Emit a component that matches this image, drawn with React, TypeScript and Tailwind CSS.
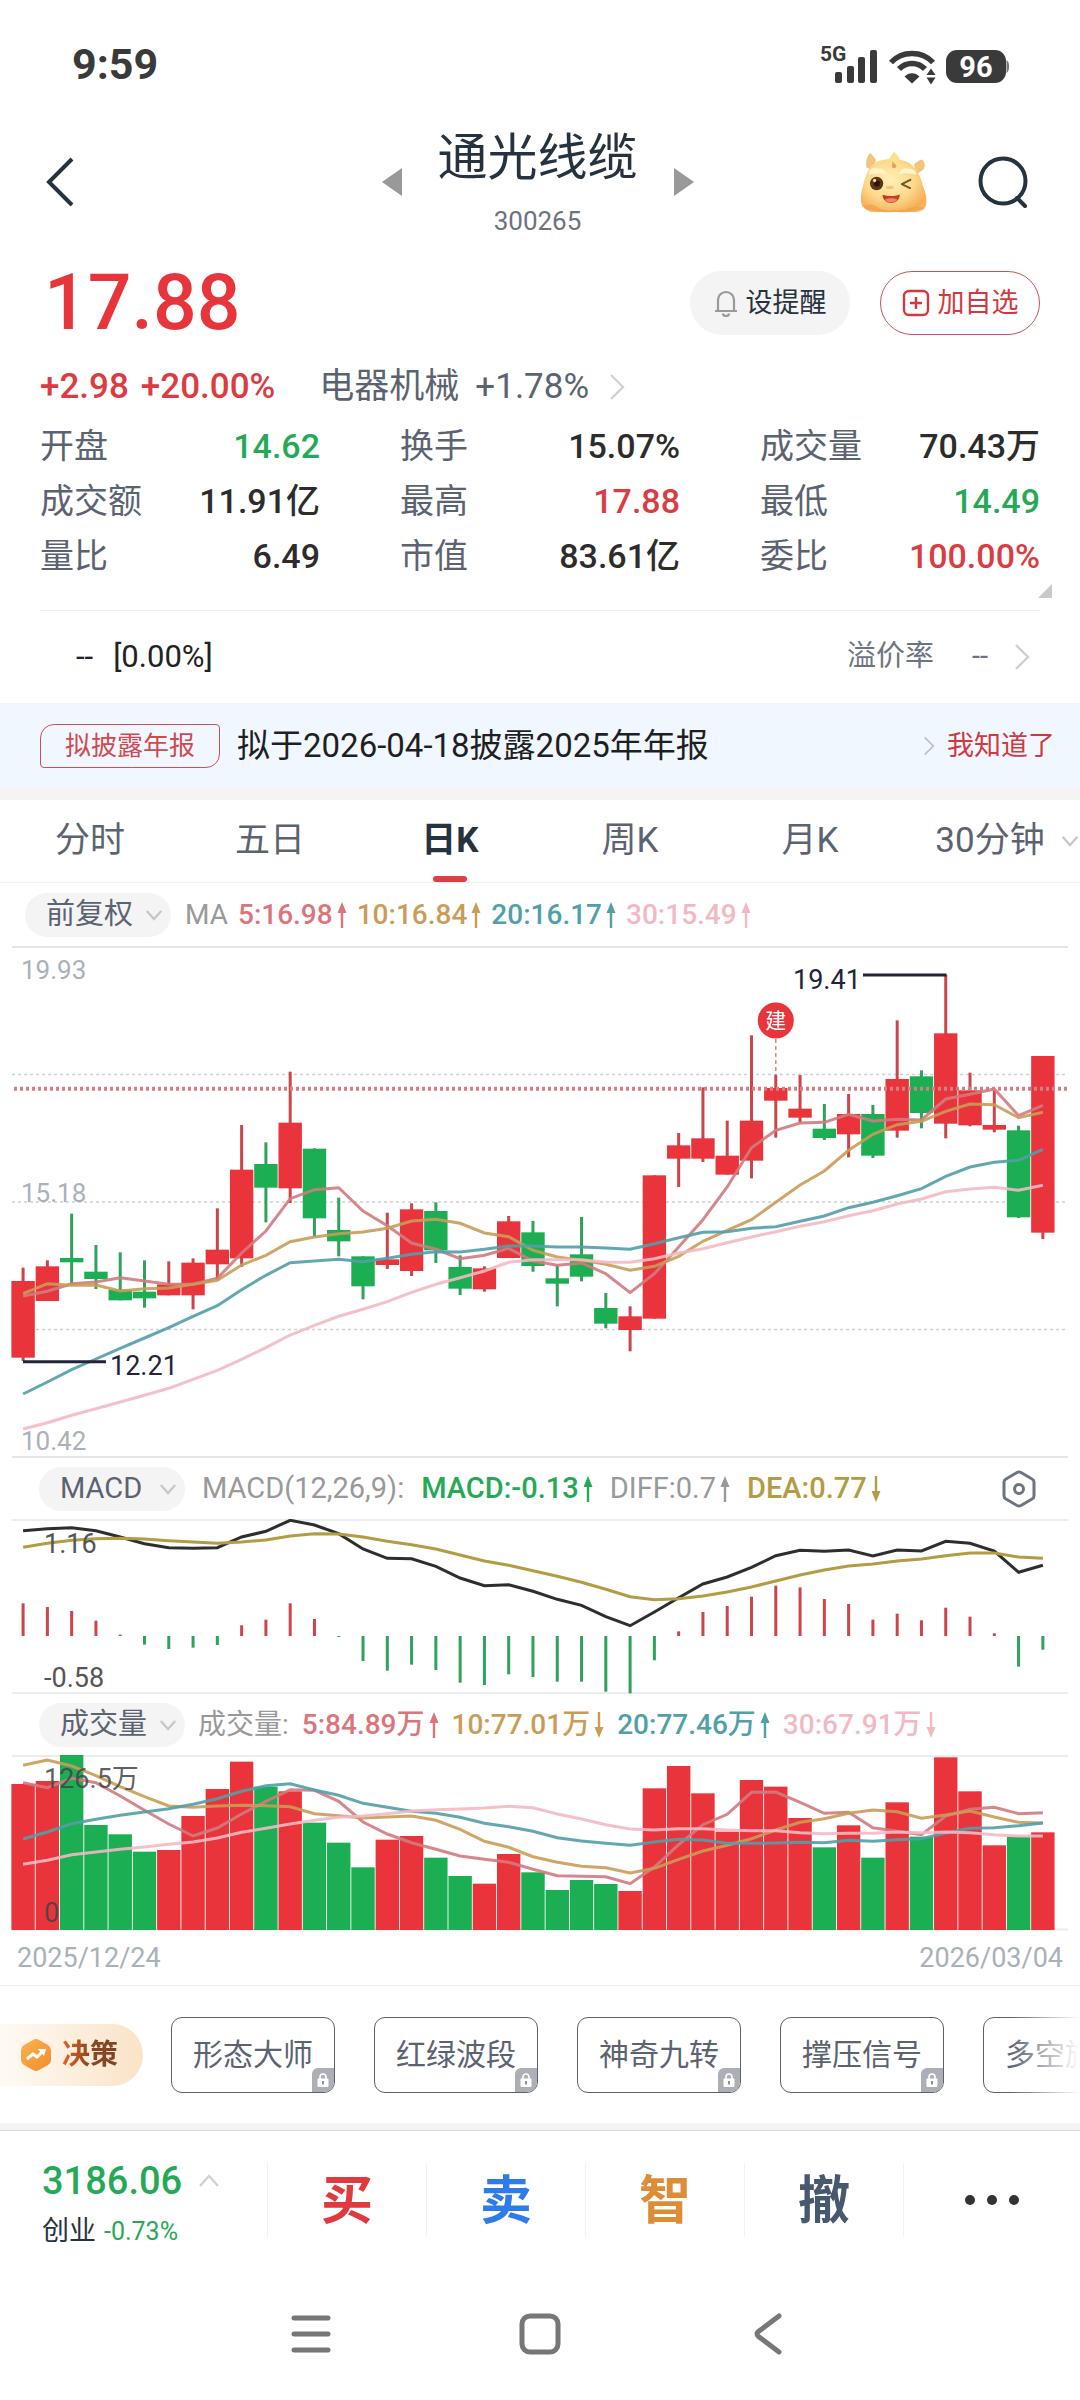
import { useState } from 'react'
import { clsx } from 'clsx'

const RED = '#ea343b'
const GREEN = '#1bae52'
const WICK_RED = '#cb454b'
const WICK_GREEN = '#30a25c'

const MA5 = '#d27a80'
const MA10 = '#c99c58'
const MA20 = '#529fa8'
const MA30 = '#f3b9c3'

// Samples are kept on a 3x vertical grid: [high, body top, body bottom, low, rising]
const CANDLES: [number, number, number, number, 0 | 1][] = [
  [982, 1022, 1252, 1262, 1], [960, 978, 1082, 1082, 1], [820, 953, 966, 1030, 0], [914, 994, 1016, 1046, 0],
  [936, 1048, 1080, 1080, 0], [960, 1054, 1074, 1102, 0], [963, 1032, 1065, 1065, 1], [954, 967, 1065, 1107, 1],
  [804, 928, 972, 1018, 1], [554, 688, 954, 980, 1], [606, 671, 742, 846, 0], [394, 547, 744, 788, 1],
  [624, 625, 834, 890, 0], [772, 869, 903, 948, 0], [948, 948, 1038, 1077, 0], [817, 957, 974, 986, 1],
  [789, 807, 992, 1007, 1], [786, 812, 930, 968, 0], [945, 980, 1045, 1064, 0], [978, 984, 1047, 1054, 1],
  [827, 843, 953, 953, 1], [842, 876, 977, 994, 0], [975, 1014, 1030, 1098, 0], [830, 942, 1009, 1023, 0],
  [1058, 1103, 1150, 1164, 0], [1098, 1128, 1169, 1233, 1], [705, 705, 1135, 1135, 1], [578, 615, 655, 740, 1],
  [441, 594, 655, 665, 1], [541, 646, 703, 703, 1], [285, 541, 661, 714, 1], [404, 443, 481, 592, 1],
  [404, 505, 532, 548, 1], [491, 565, 593, 599, 0], [461, 521, 582, 651, 1], [494, 521, 646, 653, 0],
  [240, 416, 571, 592, 1], [390, 408, 518, 564, 0], [104, 279, 550, 594, 1], [397, 450, 555, 558, 1],
  [450, 554, 568, 576, 1], [556, 570, 831, 833, 0], [347, 347, 877, 896, 1],
]

const PRICE_LINES = [
  { color: MA5, data: [1067, 1053, 1030, 1025, 1012, 1022, 1032, 1032, 1014, 938, 872, 775, 748, 742, 812, 856, 908, 927, 955, 945, 924, 962, 975, 968, 1000, 1057, 1000, 920, 838, 740, 622, 570, 548, 546, 522, 542, 537, 539, 476, 462, 446, 526, 495] },
  { color: MA10, data: [1060, 1030, 1035, 1034, 1052, 1045, 1043, 1032, 1020, 974, 945, 904, 890, 880, 875, 864, 842, 837, 849, 878, 889, 930, 950, 960, 972, 990, 978, 948, 903, 870, 838, 786, 734, 692, 630, 582, 553, 543, 513, 491, 493, 532, 516] },
  { color: MA20, data: [1361, 1325, 1288, 1256, 1224, 1193, 1162, 1128, 1096, 1048, 1005, 967, 962, 957, 964, 954, 942, 934, 935, 927, 917, 917, 920, 920, 923, 927, 910, 892, 876, 874, 864, 859, 843, 827, 802, 786, 766, 745, 708, 680, 666, 660, 627] },
  { color: MA30, data: [1466, 1447, 1425, 1405, 1385, 1365, 1344, 1317, 1290, 1257, 1222, 1184, 1155, 1128, 1107, 1084, 1056, 1032, 1012, 992, 966, 958, 958, 958, 966, 966, 955, 938, 925, 907, 890, 874, 858, 844, 826, 811, 791, 776, 754, 746, 741, 750, 735] },
]

const DIFF = [240, 234, 231, 240, 259, 279, 291, 293, 291, 259, 242, 209, 223, 249, 295, 323, 324, 347, 382, 405, 402, 422, 446, 464, 498, 525, 484, 441, 400, 379, 350, 315, 299, 302, 298, 316, 298, 301, 272, 278, 301, 365, 344]
const DEA = [290, 278, 269, 264, 263, 265, 270, 274, 278, 274, 268, 256, 249, 250, 259, 272, 282, 295, 313, 331, 344, 360, 377, 395, 416, 438, 447, 444, 436, 424, 409, 391, 373, 358, 346, 340, 331, 325, 315, 307, 307, 319, 323]
const HIST = [458, 469, 481, 510, 552, 582, 595, 591, 583, 524, 507, 458, 505, 559, 631, 660, 642, 658, 696, 703, 671, 679, 693, 693, 723, 728, 629, 542, 484, 466, 438, 405, 410, 445, 460, 507, 489, 509, 471, 498, 548, 648, 597]
const HIST_ZERO = 556

const VOLUME = [282, 273, 195, 405, 433, 485, 480, 378, 297, 215, 290, 304, 398, 458, 532, 449, 438, 503, 558, 581, 492, 547, 600, 570, 582, 603, 295, 228, 310, 425, 270, 290, 384, 472, 406, 503, 337, 440, 202, 304, 466, 440, 427]
const VOLUME_LINES = [
  { color: MA5, data: [278, 293, 265, 278, 318, 361, 402, 438, 414, 372, 334, 299, 301, 334, 396, 432, 458, 478, 498, 508, 517, 538, 557, 559, 560, 581, 531, 464, 404, 373, 307, 306, 337, 370, 367, 413, 424, 434, 378, 358, 352, 371, 368] },
  { color: MA10, data: [226, 210, 228, 257, 290, 320, 348, 352, 348, 346, 347, 350, 371, 377, 384, 381, 378, 391, 418, 454, 472, 500, 517, 529, 533, 549, 535, 508, 483, 466, 446, 420, 397, 386, 370, 360, 365, 385, 375, 363, 381, 397, 399] },
  { color: MA20, data: [447, 426, 401, 388, 376, 366, 356, 343, 326, 304, 287, 281, 300, 316, 340, 352, 364, 370, 382, 400, 410, 424, 443, 453, 460, 466, 456, 448, 450, 460, 460, 459, 457, 458, 451, 454, 449, 446, 429, 415, 413, 407, 399] },
  { color: MA30, data: [523, 511, 494, 486, 478, 471, 463, 456, 444, 427, 415, 402, 391, 382, 378, 371, 363, 359, 357, 354, 349, 353, 372, 387, 404, 417, 420, 416, 416, 420, 422, 422, 428, 431, 430, 430, 426, 428, 426, 428, 434, 438, 438] },
]

const STATS = [
  { label: '开盘', value: '14.62', tone: 'down' },
  { label: '换手', value: '15.07%' },
  { label: '成交量', value: '70.43万' },
  { label: '成交额', value: '11.91亿' },
  { label: '最高', value: '17.88', tone: 'up' },
  { label: '最低', value: '14.49', tone: 'down' },
  { label: '量比', value: '6.49' },
  { label: '市值', value: '83.61亿' },
  { label: '委比', value: '100.00%', tone: 'up' },
]

const TABS = ['分时', '五日', '日K', '周K', '月K', '30分钟']
const STRATEGIES = ['形态大师', '红绿波段', '神奇九转', '撑压信号', '多空旗舰']

const TRADES = [
  { label: '买', color: 'text-[#e0393e]' },
  { label: '卖', color: 'text-[#2f7bea]' },
  { label: '智', color: 'text-[#dd8d38]' },
  { label: '撤', color: 'text-[#47586f]' },
]

const cx = (i: number) => 23.1 + i * 24.28

function toPoints(data: number[], y: (v: number) => number) {
  return data.map((v, i) => `${cx(i).toFixed(1)},${y(v).toFixed(1)}`).join(' ')
}

interface ChevronProps {
  dir: 'right' | 'down' | 'up'
  className?: string
}

function Chevron({ dir, className }: ChevronProps) {
  const paths = { right: 'M2 2l12 12L2 26', down: 'M2 2l8 9 8-9', up: 'M2 12l9-10 9 10' }
  const boxes = { right: '0 0 16 28', down: '0 0 20 13', up: '0 0 22 14' }
  return (
    <svg viewBox={boxes[dir]} className={className} fill="none" stroke="currentColor" strokeWidth="2.4" aria-hidden="true">
      <path d={paths[dir]} />
    </svg>
  )
}

function Arrow({ up }: { up: boolean }) {
  return (
    <svg viewBox="0 0 10 26" className={clsx('ml-1 h-[26px] w-[10px] shrink-0', !up && 'rotate-180')} fill="currentColor" aria-hidden="true">
      <path d="M5 0l4.500 11h-3.300v15h-2.400v-15h-3.300z" />
    </svg>
  )
}

function Reading({ text, up, className }: { text: string; up: boolean; className: string }) {
  return (
    <span className={clsx('flex items-center whitespace-nowrap', className)}>
      {text}
      <Arrow up={up} />
    </span>
  )
}

interface PillSelectProps {
  label: string
  options: string[]
}

function PillSelect({ label, options }: PillSelectProps) {
  return (
    <div className="relative flex h-11 w-[146px] shrink-0 items-center rounded-full bg-[#f4f4f4] text-[29px] text-[#5b6371]">
      <select aria-label={label} className="h-full w-full appearance-none bg-transparent pl-[21px] outline-none">
        {options.map((o) => (
          <option key={o}>{o}</option>
        ))}
      </select>
      <Chevron dir="down" className="pointer-events-none absolute right-2 h-3 w-[18px] text-[#c3c6ca]" />
    </div>
  )
}

function StatusBar() {
  return (
    <div className="flex h-[125px] items-center justify-between pt-1 pr-[70px] pl-[72px] text-[#3a3a3a]">
      <span className="text-[43px] font-bold">9:59</span>
      <svg viewBox="0 0 190 40" className="h-10 w-[190px]" fill="currentColor" role="img" aria-label="5G, Wi-Fi, 96%">
        <text x="0" y="16" fontSize="21" fontWeight="700">5G</text>
        <rect x="15" y="27" width="7" height="11" rx="2" />
        <rect x="27" y="21" width="7" height="17" rx="2" />
        <rect x="38" y="12" width="7" height="26" rx="2" />
        <rect x="50" y="5" width="7" height="33" rx="2" />
        <g fill="none" stroke="currentColor" strokeWidth="5.500">
          <path d="M71 17.500c11-12 31-12 42 0" />
          <path d="M79 24c7-7.500 19-7.500 26 0" />
        </g>
        <path d="M84.500 31.500c4-4.500 11-4.500 15 0l-7.500 7z" />
        <path d="M111 23.500l4.500 6.500h-9zM111 39.500l4.500-7h-9z" />
        <rect x="126" y="5" width="60" height="33" rx="11" />
        <path d="M186.500 15c3.500 1.500 3.500 11.500 0 13z" opacity="0.7" />
        <text x="156" y="32" fontSize="29" fontWeight="700" textAnchor="middle" fill="#fff">96</text>
      </svg>
    </div>
  )
}

function Mascot() {
  return (
    <svg viewBox="178 390 202 190" className="h-[63px] w-[67px]" aria-hidden="true">
      <defs>
        <radialGradient id="face" cx="0.45" cy="0.4" r="0.65">
          <stop offset="0" stopColor="#fff0b8" />
          <stop offset="0.6" stopColor="#fcd98a" />
          <stop offset="1" stopColor="#f5ae58" />
        </radialGradient>
      </defs>
      <path d="M186 500c-6 20-8 45 0 58 20 16 70 18 94 16 40 2 82-2 96-16 6-20 0-45-8-60z" fill="#f6b55c" />
      <path d="M198 440c-4-16 0-32 10-44 8 6 14 14 18 22l-10 30zM370 446c6-12 4-24-6-30-10 4-18 8-24 16l12 26z" fill="#f3c47c" />
      <path d="M186 540c-6-30 8-92 34-112 24-18 88-20 114 4 26 20 40 70 38 110-20 24-60 30-94 30s-78-6-92-32z" fill="url(#face)" />
      <path d="M262 418c6-8 12-18 18-26 8 6 14 14 18 24-8 10-28 12-36 2z" fill="#fbe08f" />
      <path d="M276 422c4 6 10 8 12 14-4 8-10 8-14 2z" fill="#dfa456" />
      <path d="M204 462c2-20 16-24 26-18 12-4 24 2 28 18-18-6-36-6-54 0zM296 460c4-16 18-22 30-16 12-2 20 6 22 18-16-6-36-6-52-2z" fill="#fff3c8" />
      <ellipse cx="228" cy="488" rx="20" ry="20" fill="#5f3518" />
      <circle cx="229" cy="488" r="9" fill="#2b1409" />
      <circle cx="222" cy="479" r="5" fill="#f6d9a8" />
      <path d="M330 477l-26 13 25 12" fill="none" stroke="#6b5a20" strokeWidth="6" strokeLinecap="round" strokeLinejoin="round" />
      <ellipse cx="268" cy="500" rx="12" ry="5" fill="#f8c373" />
      <path d="M246 522c16 5 36 5 52-1 0 34-52 34-52 1z" fill="#c93c1e" />
      <path d="M253 537c10-6 28-6 38 0-8 10-30 11-38 0z" fill="#f08468" />
      <path d="M188 556c20-8 36-4 50 8 24 8 52 6 76 2 20-10 44-10 60-4-4 8-18 12-34 12H214c-14-2-24-10-26-18z" fill="#f3a047" opacity="0.7" />
    </svg>
  )
}

function Header() {
  return (
    <header className="grid h-[114px] grid-cols-[1fr_auto_1fr] items-center pr-[50px] pl-[45px]">
      <button aria-label="返回" className="w-fit text-[#27323f]">
        <svg viewBox="0 0 30 50" className="h-[50px] w-[30px]" fill="none" stroke="currentColor" strokeWidth="4">
          <path d="M27 2L4 25l23 23" />
        </svg>
      </button>
      <div className="flex items-center gap-[36px] text-[#999]">
        <button aria-label="上一只">
          <svg viewBox="0 0 20 28" className="h-7 w-5" fill="currentColor"><path d="M20 0v28L0 14z" /></svg>
        </button>
        <div className="flex flex-col items-center gap-3">
          <h1 className="text-[50px] leading-[66px] text-[#27323f]">通光线缆</h1>
          <span className="text-[26px] leading-9 text-[#6d7280]">300265</span>
        </div>
        <button aria-label="下一只">
          <svg viewBox="0 0 20 28" className="h-7 w-5" fill="currentColor"><path d="M0 0v28l20-14z" /></svg>
        </button>
      </div>
      <div className="flex items-center justify-end gap-[51px]">
        <button aria-label="助手"><Mascot /></button>
        <button aria-label="搜索" className="text-[#27323f]">
          <svg viewBox="0 0 52 54" className="h-[54px] w-[52px]" fill="none" stroke="currentColor" strokeWidth="4">
            <circle cx="25" cy="26" r="22.500" />
            <path d="M39 43l8 8" strokeLinecap="round" />
          </svg>
        </button>
      </div>
    </header>
  )
}

function Quote() {
  return (
    <section className="relative px-10 pt-8">
      <div className="flex h-16 items-center justify-between">
        <span className="ml-1 text-[77px] leading-none font-medium text-[#e8353c]">17.88</span>
        <div className="flex gap-[30px] text-[27px]">
          <button className="flex h-16 w-40 items-center justify-center gap-2 rounded-full bg-[#f4f4f4] text-[#27323f]">
            <svg viewBox="0 0 24 28" className="h-7 w-6" fill="none" stroke="#999" strokeWidth="2.200" aria-hidden="true">
              <path d="M1 22h22M4 22V11a8 8 0 0 1 16 0v11M9 24.500a3 2.500 0 0 0 6 0" />
            </svg>
            设提醒
          </button>
          <button className="flex h-16 w-40 items-center justify-center gap-2 rounded-full border border-[#cf5054] text-[#d2383d]">
            <svg viewBox="0 0 28 28" className="h-7 w-7" fill="none" stroke="currentColor" strokeWidth="2.400" aria-hidden="true">
              <rect x="2" y="2" width="24" height="24" rx="5" />
              <path d="M14 8v12M8 14h12" />
            </svg>
            加自选
          </button>
        </div>
      </div>

      <div className="mt-[30px] flex h-11 items-center text-[35px] text-[#5b6371]">
        <span className="font-medium text-[#dc3c41]">+2.98</span>
        <span className="ml-3 font-medium text-[#dc3c41]">+20.00%</span>
        <a href="#sector" className="ml-11 flex items-center">
          电器机械
          <span className="ml-4">+1.78%</span>
          <Chevron dir="right" className="ml-5 h-7 w-4 text-[#cfd1d4]" />
        </a>
      </div>

      <dl className="mt-[10px] grid grid-cols-3 gap-x-20 text-[34px]">
        {STATS.map((s) => (
          <div key={s.label} className="flex h-[55px] items-center justify-between whitespace-nowrap">
            <dt className="text-[#5b6371]">{s.label}</dt>
            <dd
              className={clsx(
                'font-medium',
                s.tone === 'up' && 'text-[#dc3c41]',
                s.tone === 'down' && 'text-[#26a957]',
                !s.tone && 'text-[#2c2c2c]'
              )}
            >
              {s.value}
            </dd>
          </div>
        ))}
      </dl>
      <svg viewBox="0 0 14 14" className="absolute right-7 bottom-0 h-[14px] w-[14px]" fill="#c6c9cd" aria-hidden="true">
        <path d="M14 0v14H0z" />
      </svg>
      <div className="h-[14px]" />
    </section>
  )
}

function Premium() {
  return (
    <div className="mx-10 mt-3 flex h-[93px] items-center border-t border-[#eee] pl-9 text-[31px]">
      <span className="text-[#222]">--</span>
      <span className="ml-5 text-[#222]">[0.00%]</span>
      <a href="#premium" className="ml-auto flex items-center pr-[10px] text-[29px] text-[#6d7480]">
        溢价率
        <span className="ml-[38px]">--</span>
        <Chevron dir="right" className="ml-[26px] h-7 w-4 text-[#cfd1d4]" />
      </a>
    </div>
  )
}

function Notice() {
  return (
    <div className="flex h-[86px] items-center bg-[#f0f7ff] pr-[25px] pl-10 whitespace-nowrap">
      <span className="flex h-11 w-[180px] items-center justify-center rounded-tl-[14px] rounded-br-[14px] rounded-tr-sm rounded-bl-sm border border-[#cf5054] text-[26px] text-[#d24a4e]">
        拟披露年报
      </span>
      <span className="ml-[17px] text-[33px] text-[#1f1f1f]">拟于2026-04-18披露2025年年报</span>
      <button className="ml-auto flex items-center gap-3 text-[27px] text-[#d2383d]">
        <Chevron dir="right" className="h-5 w-3 text-[#b9bec6]" />
        我知道了
      </button>
    </div>
  )
}

function PeriodTabs() {
  const [active, setActive] = useState('日K')
  return (
    <nav className="grid h-[83px] grid-cols-6 border-b border-[#f0f0f0] text-[35px]">
      {TABS.map((t) => (
        <button
          key={t}
          onClick={() => setActive(t)}
          className={clsx(
            'relative flex items-center justify-center whitespace-nowrap',
            t === active ? 'font-bold text-[#27323f]' : 'text-[#5b6371]'
          )}
        >
          {t}
          {t === active && <span className="absolute bottom-0 h-[6px] w-[34px] rounded-full bg-[#de3f42]" />}
          {t === '30分钟' && <Chevron dir="down" className="absolute right-0 h-3 w-5 text-[#c3c6ca]" />}
        </button>
      ))}
    </nav>
  )
}

function PriceChart() {
  const y = (v: number) => (v - 20) / 3 + 1
  return (
    <svg viewBox="0 0 1080 512" className="block w-full" role="img" aria-label="日K线">
      <path d="M12 1h1056M12 511h1056" stroke="#e6e6e6" strokeWidth="2" />
      <path d="M12 128.500h1054M12 256h1054M12 383.500h1054" stroke="#cdd1d1" strokeWidth="1.300" strokeDasharray="3 3" />
      <g fontSize="26" fill="#a9b1b9">
        <text x="21" y="33">19.93</text>
        <text x="21" y="256">15.18</text>
        <text x="21" y="504">10.42</text>
      </g>
      {CANDLES.map(([high, top, bottom, low, rising], i) => (
        <g key={i}>
          <rect x={cx(i) - 1.5} y={y(high)} width="3" height={y(low) - y(high)} fill={rising ? WICK_RED : WICK_GREEN} />
          <rect x={cx(i) - 11.7} y={y(top)} width="23.400" height={y(bottom) - y(top)} fill={rising ? RED : GREEN} />
        </g>
      ))}
      <path d="M14 142.700h1053" stroke="#d28084" strokeWidth="4" strokeDasharray="3 3" />
      {PRICE_LINES.map((l) => (
        <polyline key={l.color} points={toPoints(l.data, y)} fill="none" stroke={l.color} strokeWidth="3" strokeOpacity="0.9" />
      ))}
      <path d="M23 415.700h83M863 29h83.500" stroke="#22253a" strokeWidth="3" />
      <g fontSize="27" fill="#22253a">
        <text x="110" y="429">12.21</text>
        <text x="793" y="43">19.41</text>
      </g>
      <path d="M775.800 93v36" stroke="#d28084" strokeWidth="1.400" strokeDasharray="4 3" />
      <circle cx="775.800" cy="74.500" r="18" fill={RED} />
      <text x="775.800" y="82" fontSize="21" fill="#fff" textAnchor="middle">建</text>
    </svg>
  )
}

function MacdChart() {
  const y = (v: number) => (v - 208) / 3 + 1
  return (
    <svg viewBox="0 0 1080 175" className="block w-full" role="img" aria-label="MACD">
      <path d="M12 1h1056M12 174h1056" stroke="#e8e8e8" strokeWidth="1.500" />
      {HIST.map((v, i) => (
        <rect
          key={i}
          x={cx(i) - 1.5}
          y={y(Math.min(v, HIST_ZERO))}
          width="3"
          height={Math.abs(v - HIST_ZERO) / 3}
          fill={v < HIST_ZERO ? WICK_RED : WICK_GREEN}
        />
      ))}
      <polyline points={toPoints(DIFF, y)} fill="none" stroke="#2e2e2e" strokeWidth="3" />
      <polyline points={toPoints(DEA, y)} fill="none" stroke="#b39c42" strokeWidth="3" />
      <g fontSize="27" fill="#555">
        <text x="44" y="34">1.16</text>
        <text x="44" y="168">-0.58</text>
      </g>
    </svg>
  )
}

function VolumeChart() {
  const y = (v: number) => (v - 198) / 3 + 1
  return (
    <svg viewBox="0 0 1080 176" className="block w-full" role="img" aria-label="成交量">
      <path d="M12 1h1056M12 174.500h1056" stroke="#ebebeb" strokeWidth="2" />
      {VOLUME.map((v, i) => (
        <rect key={i} x={cx(i) - 11.7} y={y(v)} width="23.400" height={y(720) - y(v)} fill={CANDLES[i][4] ? RED : GREEN} />
      ))}
      {VOLUME_LINES.map((l) => (
        <polyline key={l.color} points={toPoints(l.data, y)} fill="none" stroke={l.color} strokeWidth="3" strokeOpacity="0.9" />
      ))}
      <g fontSize="27" fill="#444" fillOpacity="0.85">
        <text x="44" y="33">126.5万</text>
        <text x="44" y="167">0</text>
      </g>
    </svg>
  )
}

function Strategies() {
  return (
    <div className="relative flex h-[137px] items-center overflow-hidden">
      <button className="flex h-[62px] w-[143px] shrink-0 items-center gap-[10px] rounded-r-full bg-linear-to-r from-[#fefaf4] to-[#fae3c8] pl-5 text-[28px] font-bold">
        <svg viewBox="0 0 32 34" className="h-[34px] w-8 shrink-0" aria-hidden="true">
          <defs>
            <linearGradient id="hex" x1="0" y1="0" x2="1" y2="1">
              <stop offset="0" stopColor="#fbb452" />
              <stop offset="1" stopColor="#f28a2c" />
            </linearGradient>
          </defs>
          <path d="M13 2q3-2 6 0l9 5q3 2 3 5v10q0 3-3 5l-9 5q-3 2-6 0l-9-5q-3-2-3-5V12q0-3 3-5z" fill="url(#hex)" />
          <path d="M7 21l6-5 4 3 7-7" fill="none" stroke="#fff" strokeWidth="3" />
          <path d="M18 11h8l-2 7z" fill="#fff" />
        </svg>
        <span className="bg-linear-to-r from-[#e8631c] via-[#8e4620] to-[#7c4526] bg-clip-text whitespace-nowrap text-transparent">决策</span>
      </button>
      <div className="ml-7 flex gap-[39px]">
        {STRATEGIES.map((s) => (
          <button
            key={s}
            className="relative h-[76px] w-[164px] shrink-0 overflow-hidden rounded-[11px] border border-[#5c626a] text-[30px] whitespace-nowrap text-[#5b6371]"
          >
            {s}
            <span className="absolute right-0 bottom-0 flex h-6 w-[22px] items-center justify-center rounded-tl-md bg-[#adafb6]">
              <svg viewBox="0 0 12 14" className="h-[14px] w-3" aria-hidden="true">
                <path d="M3 6V4a3 3 0 0 1 6 0v2" fill="none" stroke="#fff" strokeWidth="1.600" />
                <rect x="0.500" y="5.500" width="11" height="8.500" rx="1" fill="#fff" />
                <rect x="5" y="8" width="2" height="3.500" fill="#8e9097" />
              </svg>
            </span>
          </button>
        ))}
      </div>
      <div className="pointer-events-none absolute inset-y-0 right-0 w-[70px] bg-linear-to-r from-transparent to-white" />
    </div>
  )
}

function TradeBar() {
  return (
    <div className="flex h-[139px] items-center border-t border-[#d8d8d8]">
      <a href="#index" className="flex w-[267px] shrink-0 flex-col justify-center pt-3 pl-[42px] whitespace-nowrap">
        <span className="flex items-center gap-4 text-[38px] leading-[50px] font-medium text-[#26a957]">
          3186.06
          <Chevron dir="up" className="h-[14px] w-[22px] text-[#cfd1d4]" />
        </span>
        <span className="flex items-baseline gap-2 text-[27px] leading-[50px] text-[#27323f]">
          创业
          <span className="text-[25px] text-[#26a957]">-0.73%</span>
        </span>
      </a>
      {TRADES.map((t) => (
        <button key={t.label} className={clsx('h-[74px] w-[159px] border-l border-[#f0f0f0] pt-1 text-[52px] leading-none font-bold', t.color)}>
          {t.label}
        </button>
      ))}
      <button aria-label="更多" className="flex h-[74px] flex-1 items-center justify-center gap-3 border-l border-[#f0f0f0]">
        <span className="size-[10px] rounded-full bg-[#333]" />
        <span className="size-[10px] rounded-full bg-[#333]" />
        <span className="size-[10px] rounded-full bg-[#333]" />
      </button>
    </div>
  )
}

function SystemNav() {
  return (
    <div className="flex h-[130px] items-center justify-center gap-[187px] text-[#777]">
      <button aria-label="最近任务">
        <svg viewBox="0 0 42 42" className="size-[42px]" fill="none" stroke="currentColor" strokeWidth="5" strokeLinecap="round">
          <path d="M4 5h34M4 21h34M4 37h34" />
        </svg>
      </button>
      <button aria-label="主屏幕">
        <svg viewBox="0 0 42 42" className="size-[42px]" fill="none" stroke="currentColor" strokeWidth="5">
          <rect x="3" y="3" width="36" height="36" rx="8" />
        </svg>
      </button>
      <button aria-label="后退">
        <svg viewBox="0 0 42 42" className="size-[42px]" fill="none" stroke="currentColor" strokeWidth="5" strokeLinecap="round">
          <path d="M31 3L10.500 18.500q-3 2.500 0 5L31 39" />
        </svg>
      </button>
    </div>
  )
}

export default function App() {
  return (
    <div className="min-h-screen w-full overflow-x-hidden bg-white font-[Roboto,'Noto_Sans_CJK_SC',sans-serif]">
      <StatusBar />
      <Header />
      <Quote />
      <Premium />
      <Notice />
      <div className="h-[11px] bg-[#f4f4f4]" />
      <PeriodTabs />

      <div className="flex h-[63px] items-center gap-[10px] pl-[25px] text-[28px]">
        <PillSelect label="复权" options={['前复权', '后复权', '不复权']} />
        <span className="ml-1 text-[#999]">MA</span>
        <Reading text="5:16.98" up className="font-medium text-[#d9757b]" />
        <Reading text="10:16.84" up className="font-medium text-[#c99c58]" />
        <Reading text="20:16.17" up className="font-medium text-[#529fa8]" />
        <Reading text="30:15.49" up className="font-medium text-[#f3b9c3]" />
      </div>
      <PriceChart />

      <div className="flex h-[61px] items-center gap-[17px] pr-11 pl-[39px] text-[29px]">
        <PillSelect label="副图指标" options={['MACD', 'KDJ', 'RSI']} />
        <span className="text-[#999]">MACD(12,26,9):</span>
        <Reading text="MACD:-0.13" up className="font-medium text-[#26a957]" />
        <Reading text="DIFF:0.7" up className="text-[#999]" />
        <Reading text="DEA:0.77" up={false} className="font-medium text-[#b39c42]" />
        <button aria-label="指标设置" className="ml-auto text-[#6d7480]">
          <svg viewBox="0 0 34 38" className="h-[38px] w-[34px]" fill="none" stroke="currentColor" strokeWidth="3">
            <path d="M15 2.500q2-1 4 0l11 6.500q2 1 2 3v14q0 2-2 3l-11 6.500q-2 1-4 0L4 29q-2-1-2-3V12q0-2 2-3z" />
            <circle cx="17" cy="19" r="4.500" />
          </svg>
        </button>
      </div>
      <MacdChart />

      <div className="flex h-[61px] items-center gap-[13px] pl-[39px] text-[28px]">
        <PillSelect label="副图指标" options={['成交量', '成交额']} />
        <span className="text-[#999]">成交量:</span>
        <Reading text="5:84.89万" up className="font-medium text-[#d9757b]" />
        <Reading text="10:77.01万" up={false} className="font-medium text-[#c99c58]" />
        <Reading text="20:77.46万" up className="font-medium text-[#529fa8]" />
        <Reading text="30:67.91万" up={false} className="font-medium text-[#f3b9c3]" />
      </div>
      <VolumeChart />

      <div className="flex h-[55px] items-center justify-between border-b border-[#f0f0f0] px-[17px] text-[27px] text-[#a9b1b9]">
        <span>2025/12/24</span>
        <span>2026/03/04</span>
      </div>
      <Strategies />
      <div className="h-[7px] bg-[#f4f4f4]" />
      <TradeBar />
      <SystemNav />
    </div>
  )
}
